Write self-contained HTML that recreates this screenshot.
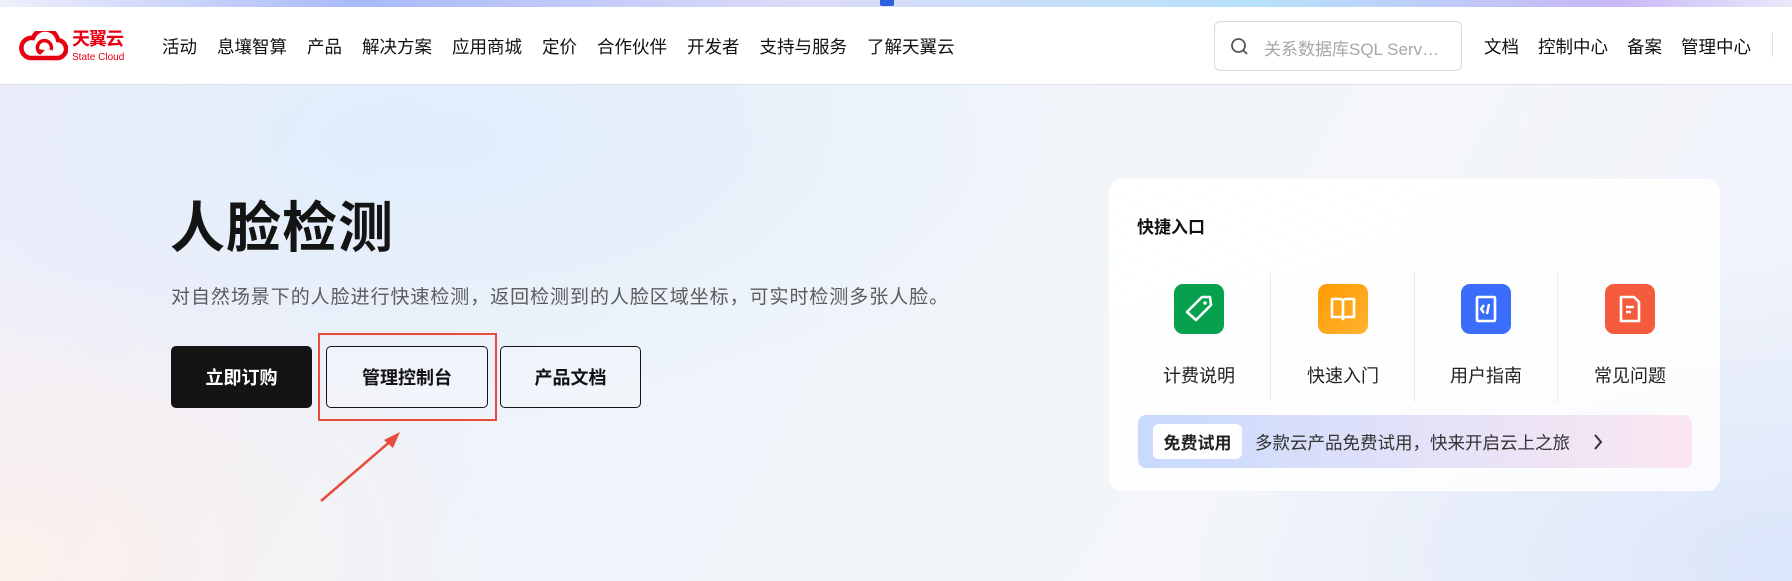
<!DOCTYPE html>
<html><head><meta charset="utf-8"><style>
*{margin:0;padding:0;box-sizing:border-box}
body{width:1792px;height:581px;overflow:hidden;position:relative;font-family:"Liberation Sans","Noto Sans CJK SC",sans-serif;color:#111;
background:radial-gradient(ellipse 650px 280px at 420px 140px,#dfedfb 0%,rgba(223,237,251,0) 100%),radial-gradient(ellipse 500px 300px at 0px 560px,#fbf1ec 0%,rgba(251,241,236,0) 100%),radial-gradient(ellipse 600px 300px at 1792px 560px,#dce6fb 0%,rgba(220,230,251,0) 100%),linear-gradient(120deg,#f0ecfa 0%,#eff4fa 40%,#f4f6f9 70%,#eef2fb 100%);}
.top{position:absolute;left:0;top:0;width:1792px;height:7px;background:linear-gradient(90deg,#eef0fb 0%,#a9b9fb 20%,#dcdcf8 45%,#b6e1fb 70%,#c7b7f7 90%,#eae8fb 100%)}
.hdr{position:absolute;left:0;top:7px;width:1792px;height:78px;background:#fff;border-bottom:1px solid #dde2ec}
.nav{position:absolute;top:34px;font-size:17.5px;color:#111;white-space:nowrap}
.nav span{margin-right:20px}
.search{position:absolute;left:1214px;top:21px;width:248px;height:50px;border:1px solid #d9d9de;border-radius:6px;background:#fff}
.search .ph{position:absolute;left:49px;top:13px;font-size:17px;color:#a7a7a7}
h1{position:absolute;left:170px;top:183px;font-size:55px;font-weight:bold;letter-spacing:1px;color:#141414}
.sub{position:absolute;left:171px;top:282px;font-size:19px;letter-spacing:.95px;color:#5c5c5c}
.btn{position:absolute;top:346px;height:62px;border:1px solid #141414;border-radius:5px;font-size:18px;font-weight:bold;display:flex;align-items:center;justify-content:center}
.card{position:absolute;left:1109px;top:179px;width:611px;height:312px;border-radius:13px;background:linear-gradient(160deg,rgba(255,255,255,.95),rgba(255,255,255,.8));border:1px solid rgba(255,255,255,.9)}
.ic{position:absolute;top:284px;width:50px;height:50px;border-radius:9px}
.lbl{position:absolute;top:362px;font-size:18px;color:#222;width:120px;text-align:center}
.div{position:absolute;top:271px;width:1px;height:131px;background:#ececf0}
</style></head><body>
<div class="top"></div>
<div style="position:absolute;left:880px;top:0;width:14px;height:6px;background:#2b5fe0;border-radius:0 0 2px 2px"></div>
<div class="hdr"></div>
<svg style="position:absolute;left:18px;top:31px" width="50" height="30" viewBox="0 0 50 30"><path d="M12 27 H38 A9 9 0 0 0 40 9 A13 13 0 0 0 15 7 A10 10 0 0 0 12 27 Z" fill="none" stroke="#e60012" stroke-width="4.5"/><path d="M22 22 A7 7 0 1 1 33 19" fill="none" stroke="#e60012" stroke-width="3.5"/><path d="M18 18 L22 24 L27 19 Z" fill="#e60012"/></svg>
<div style="position:absolute;left:72px;top:29px;font-size:18px;line-height:20px;font-weight:bold;color:#e60012;letter-spacing:-1px">天翼云</div>
<div style="position:absolute;left:72px;top:52px;font-size:10px;line-height:11px;color:#e60012">State Cloud</div>
<div class="nav" style="left:162px"><span>活动</span><span>息壤智算</span><span>产品</span><span>解决方案</span><span>应用商城</span><span>定价</span><span>合作伙伴</span><span>开发者</span><span>支持与服务</span><span>了解天翼云</span></div>
<div class="search"><svg style="position:absolute;left:15px;top:15px" width="19" height="20" viewBox="0 0 19 20"><circle cx="8.5" cy="8.5" r="6.5" fill="none" stroke="#555" stroke-width="1.8"/><path d="M13 13 L17 17" stroke="#555" stroke-width="1.8"/></svg><div class="ph">关系数据库SQL Serv…</div></div>
<div class="nav" style="left:1484px"><span style="margin-right:19px">文档</span><span style="margin-right:19px">控制中心</span><span style="margin-right:19px">备案</span><span>管理中心</span></div>
<div style="position:absolute;left:1772px;top:33px;width:1px;height:24px;background:#ddd"></div>

<h1>人脸检测</h1>
<div class="sub">对自然场景下的人脸进行快速检测，返回检测到的人脸区域坐标，可实时检测多张人脸。</div>
<div class="btn" style="left:171px;width:141px;background:#141414;color:#fff">立即订购</div>
<div class="btn" style="left:326px;width:162px;background:rgba(255,255,255,.2)">管理控制台</div>
<div class="btn" style="left:500px;width:141px;background:rgba(255,255,255,.2)">产品文档</div>
<div style="position:absolute;left:318px;top:333px;width:179px;height:88px;border:2px solid #e84c3d"></div>
<svg style="position:absolute;left:0;top:0" width="500" height="520"><path d="M321 501 L393 439" stroke="#e84c3d" stroke-width="2.5"/><path d="M400 432 L384 440 L393 448 Z" fill="#e84c3d"/></svg>

<div class="card"></div>
<div style="position:absolute;left:1137px;top:213px;font-size:17px;font-weight:bold">快捷入口</div>
<div class="div" style="left:1270px"></div><div class="div" style="left:1414px"></div><div class="div" style="left:1557px"></div>
<div class="ic" style="left:1174px;background:#07a04f"><svg width="50" height="50" viewBox="0 0 50 50"><path d="M13 28 L28 13 L36 13 L37 21 L22 36 Z" fill="none" stroke="#fff" stroke-width="2.6" stroke-linejoin="round"/><circle cx="31" cy="19" r="1.8" fill="#fff"/></svg></div>
<div class="ic" style="left:1318px;background:linear-gradient(135deg,#ff9b00,#ffb233)"><svg width="50" height="50" viewBox="0 0 50 50"><path d="M14 15 H22 Q25 15 25 18 V35 Q25 33 22 33 H14 Z M36 15 H28 Q25 15 25 18 V35 Q25 33 28 33 H36 Z" fill="none" stroke="#fff" stroke-width="2.6" stroke-linejoin="round"/></svg></div>
<div class="ic" style="left:1461px;background:#3a6dfb"><svg width="50" height="50" viewBox="0 0 50 50"><rect x="16" y="13" width="18" height="24" rx="1" fill="none" stroke="#fff" stroke-width="2.6"/><path d="M23 21 L20 25 L23 29 M28 20 L26 30" stroke="#fff" stroke-width="2.4" fill="none"/></svg></div>
<div class="ic" style="left:1605px;background:#f45b3c"><svg width="50" height="50" viewBox="0 0 50 50"><path d="M16 13 H29 L34 18 V37 H16 Z" fill="none" stroke="#fff" stroke-width="2.6" stroke-linejoin="round"/><path d="M21 23 H29 M21 28 H26" stroke="#fff" stroke-width="2.4"/></svg></div>
<div class="lbl" style="left:1139px">计费说明</div>
<div class="lbl" style="left:1283px">快速入门</div>
<div class="lbl" style="left:1426px">用户指南</div>
<div class="lbl" style="left:1570px">常见问题</div>
<div style="position:absolute;left:1138px;top:415px;width:554px;height:53px;border-radius:8px;background:linear-gradient(90deg,#c8dafd,#e5e2f8 55%,#fbe6f0)"></div>
<div style="position:absolute;left:1153px;top:424px;width:89px;height:35px;border-radius:6px;background:#fff;font-size:17px;font-weight:bold;display:flex;align-items:center;justify-content:center;color:#222">免费试用</div>
<div style="position:absolute;left:1255px;top:430px;font-size:17.5px;color:#333">多款云产品免费试用，快来开启云上之旅</div>
<svg style="position:absolute;left:1590px;top:431px" width="16" height="22" viewBox="0 0 16 22"><path d="M5 4 L11 11 L5 18" fill="none" stroke="#333" stroke-width="2"/></svg>
</body></html>
